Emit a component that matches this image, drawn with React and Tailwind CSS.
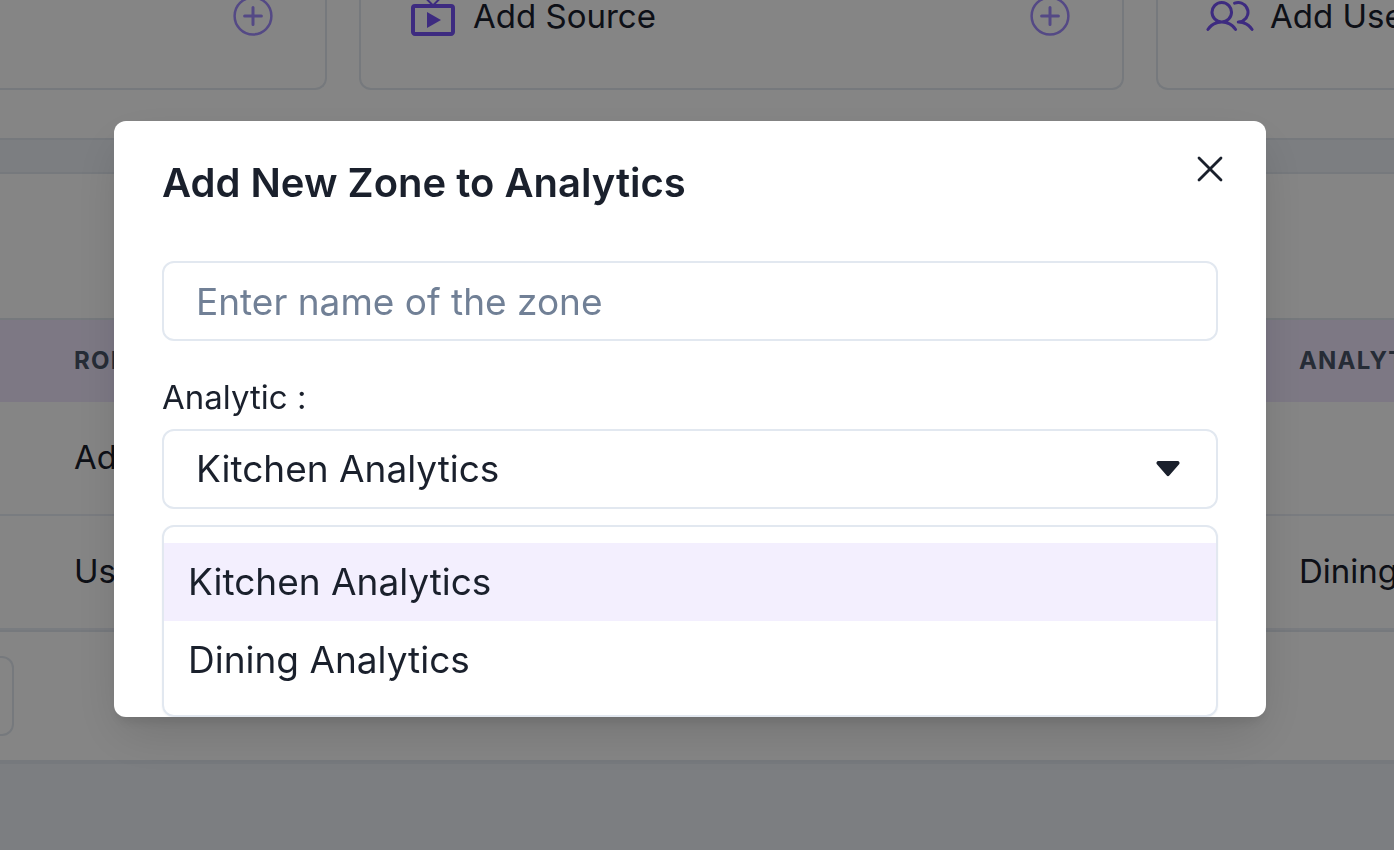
import { useState } from 'react'
import { X } from 'lucide-react'
import { BsCaretDownFill } from 'react-icons/bs'
import { MdLiveTv } from 'react-icons/md'
import { PiUsers } from 'react-icons/pi'

const ANALYTICS = ['Kitchen Analytics', 'Dining Analytics']

const ROWS = [
  { id: 1, role: 'Admin', analytics: '' },
  { id: 2, role: 'User', analytics: 'Dining Analytics' },
]

function AddButton({ label }) {
  return (
    <button aria-label={label} className="shrink-0 text-[#a18cff]">
      <svg width="40" height="40" viewBox="0 0 40 40" fill="none" stroke="currentColor" strokeLinecap="round">
        <circle cx="20" cy="20" r="18.4" strokeWidth="2.5" />
        <path d="M20 11.6v16.8M11.6 20h16.8" strokeWidth="3" />
      </svg>
    </button>
  )
}

function Dashboard() {
  return (
    <div className="min-h-screen overflow-hidden bg-[#eef2f8]">
      <section className="border-b-2 border-[#e2e8f0] bg-white pb-12">
        <div className="grid grid-cols-[327fr_765fr_238fr] gap-8">
          <div className="flex h-[90px] items-start justify-end rounded-br-xl border-r-2 border-b-2 border-[#e2e8f0] pr-13">
            <div className="-mt-1 flex">
              <AddButton label="Add" />
            </div>
          </div>
          <div className="flex h-[90px] items-start rounded-b-xl border-x-2 border-b-2 border-[#e2e8f0] pr-13 pl-12">
            <div className="-mt-2 flex flex-1 items-center gap-4">
              <MdLiveTv size={48} className="text-[#7654f5]" />
              <span className="flex-1 text-[33px] leading-8">Add Source</span>
              <AddButton label="Add source" />
            </div>
          </div>
          <div className="flex h-[90px] items-start overflow-hidden rounded-bl-xl border-b-2 border-l-2 border-[#e2e8f0] pl-12">
            <div className="-mt-2 flex items-center gap-4 whitespace-nowrap">
              <PiUsers size={48} className="text-[#7654f5]" />
              <span className="text-[33px] leading-8">Add User</span>
            </div>
          </div>
        </div>
      </section>

      <section className="mt-8 border-t-2 border-b-4 border-[#e2e8f0] bg-white pt-36 pb-6">
        <div className="border-y-2 border-[#e2e8f0]">
          <table className="w-full table-fixed border-separate border-spacing-0 text-left">
            <thead>
              <tr className="h-[82px] bg-[#efe7fe] text-2xl tracking-wider text-[#4a5568]">
                <th className="pl-[74px] font-bold">ROLE</th>
                <th className="w-[95px] overflow-hidden font-bold whitespace-nowrap">ANALYTICS</th>
              </tr>
            </thead>
            <tbody>
              {ROWS.map((r) => (
                <tr key={r.id} className="h-[114px] text-[33px]">
                  <td className="border-b-2 border-[#e9edf5] pl-[74px]">{r.role}</td>
                  <td className="overflow-hidden border-b-2 border-[#e9edf5] whitespace-nowrap">{r.analytics}</td>
                </tr>
              ))}
            </tbody>
          </table>
        </div>
        <button aria-label="Previous page" className="mt-6 block h-20 w-[14px] rounded-r-xl border-y-2 border-r-2 border-[#e2e8f0]" />
      </section>
    </div>
  )
}

function ZoneModal() {
  const [name, setName] = useState('')
  const [analytic, setAnalytic] = useState(ANALYTICS[0])

  return (
    <div className="fixed inset-0 flex items-start justify-center bg-black/48 pt-[121px] pr-[14px]">
      <div
        role="dialog"
        aria-labelledby="zone-title"
        className="w-full max-w-6xl overflow-hidden rounded-xl bg-white px-12 shadow-[0_20px_50px_-6px_rgba(0,0,0,0.15),0_8px_12px_-4px_rgba(0,0,0,0.1)]"
      >
        <header className="flex items-start justify-between pt-8 pb-12">
          <h1 id="zone-title" className="text-[40px] leading-[60px] font-semibold">Add New Zone to Analytics</h1>
          <button aria-label="Close" className="-mt-1.5 -mr-3.5">
            <X size={44} strokeWidth={1.5} />
          </button>
        </header>

        <input
          type="text"
          aria-label="Zone name"
          placeholder="Enter name of the zone"
          value={name}
          onChange={(e) => setName(e.target.value)}
          className="block h-20 w-full rounded-xl border-2 border-[#e2e8f0] px-8 text-[37px] placeholder:text-[#718096]"
        />

        <label htmlFor="analytic" className="mt-8 mb-2 block text-[33px] leading-12">Analytic :</label>
        <div className="relative">
          <select
            id="analytic"
            value={analytic}
            onChange={(e) => setAnalytic(e.target.value)}
            className="block h-20 w-full appearance-none rounded-xl border-2 border-[#e2e8f0] bg-white px-8 text-[37px] leading-[56px]"
          >
            {ANALYTICS.map((a) => (
              <option key={a}>{a}</option>
            ))}
          </select>
          <BsCaretDownFill size={32} className="pointer-events-none absolute top-6 right-[34px]" />
        </div>

        <ul role="listbox" aria-label="Analytic" className="mt-4 rounded-xl border-2 border-[#e2e8f0] py-4 shadow-xs">
          {ANALYTICS.map((a) => (
            <li key={a} role="option" aria-selected={a === analytic}>
              <button
                onClick={() => setAnalytic(a)}
                className={`block h-[78px] w-full px-6 text-left text-[37px] ${a === analytic ? 'bg-[#f3effe]' : 'bg-white'}`}
              >
                {a}
              </button>
            </li>
          ))}
        </ul>
      </div>
    </div>
  )
}

export default function App() {
  return (
    <div className="font-[Inter,sans-serif] text-[#1a202c]">
      <Dashboard />
      <ZoneModal />
    </div>
  )
}
